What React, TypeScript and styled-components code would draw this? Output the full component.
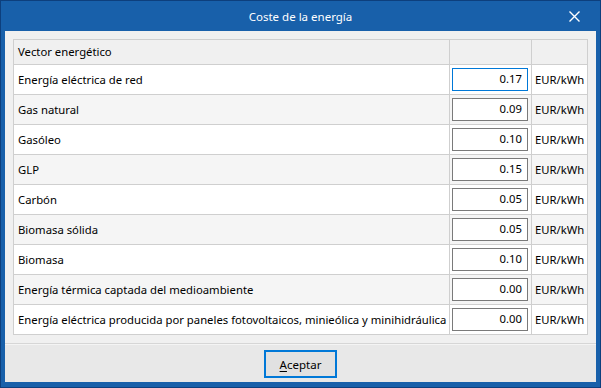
import React from "react";
import styled, { createGlobalStyle } from "styled-components";

const GlobalStyle = createGlobalStyle`
    html, body {
        margin: 0;
        padding: 0;
        background: #ffffff;
    }
    body {
        font-family: "Noto Sans", "Open Sans", sans-serif;
    }
`;

const Window = styled.div`
    width: 601px;
    height: 388px;
    box-sizing: border-box;
    border: 1px solid #0d3f7d;
    background-color: #1860aa;
    display: flex;
    flex-direction: column;
    padding: 0 4px 5px 4px;
`;

const TitleBar = styled.div`
    height: 30px;
    flex: none;
    display: flex;
    align-items: center;
    justify-content: center;
    position: relative;
    color: #ffffff;
    font-size: 11.5px;
`;

const CloseButton = styled.div`
    position: absolute;
    right: 16px;
    top: 10px;
    width: 11px;
    height: 11px;
    display: flex;
`;

const Body = styled.div`
    flex: 1;
    display: flex;
    flex-direction: column;
    background-color: #f0f0f0;
`;

const TableArea = styled.div`
    padding: 8px 8px 8px 8px;
    border-bottom: 1px solid #d6d6d6;
`;

const Grid = styled.div`
    display: grid;
    grid-template-columns: 436px 82px 56px;
    grid-auto-rows: 30px;
    grid-template-rows: 25px;
    border-top: 1px solid #cfcfcf;
    border-left: 1px solid #cfcfcf;
    font-size: 11.3px;
    color: #000000;
`;

const Cell = styled.div<{ $bg: string; $pad?: number }>`
    background-color: ${p => p.$bg};
    border-right: 1px solid #cfcfcf;
    border-bottom: 1px solid #cfcfcf;
    display: flex;
    align-items: center;
    padding: 0 0 1px ${p => p.$pad ?? 4}px;
    white-space: nowrap;
    overflow: hidden;
`;

const InputCell = styled.div<{ $bg: string }>`
    background-color: ${p => p.$bg};
    border-right: 1px solid #cfcfcf;
    border-bottom: 1px solid #cfcfcf;
    padding: 3px 3px 3px 2px;
    display: flex;
`;

const ValueBox = styled.div<{ $focused?: boolean }>`
    flex: 1;
    box-sizing: border-box;
    height: 23px;
    background: #ffffff;
    border: 1px solid ${p => (p.$focused ? "#0078d7" : "#7a7a7a")};
    display: flex;
    align-items: center;
    justify-content: flex-end;
    padding: 0 5px 2px 0;
`;

const Footer = styled.div`
    flex: 1;
    display: flex;
    align-items: center;
    justify-content: center;
    background-color: #e8e8e8;
    border-top: 1px solid #f4f4f4;
`;

const DefaultButton = styled.div`
    width: 73px;
    height: 28px;
    box-sizing: border-box;
    border: 2px solid #0078d7;
    background-color: #e1e1e1;
    display: flex;
    align-items: center;
    justify-content: center;
    font-size: 11.5px;
    color: #000000;
    margin-top: 1px;
`;

const Mnemonic = styled.span`
    text-decoration: underline;
    text-underline-offset: 2px;
`;

const rows = [
    { name: "Energía eléctrica de red", value: "0.17" },
    { name: "Gas natural", value: "0.09" },
    { name: "Gasóleo", value: "0.10" },
    { name: "GLP", value: "0.15" },
    { name: "Carbón", value: "0.05" },
    { name: "Biomasa sólida", value: "0.05" },
    { name: "Biomasa", value: "0.10" },
    { name: "Energía térmica captada del medioambiente", value: "0.00" },
    { name: "Energía eléctrica producida por paneles fotovoltaicos, minieólica y minihidráulica", value: "0.00" },
];

const headerBg = "#f0f0f0";

export default function App() {
    return (
        <>
            <GlobalStyle />
            <Window>
                <TitleBar>
                    Coste de la energía
                    <CloseButton>
                        <svg width="11" height="11" viewBox="0 0 11 11">
                            <path d="M0.5 0.5 L10.5 10.5 M10.5 0.5 L0.5 10.5" stroke="#ffffff" strokeWidth="1.4" />
                        </svg>
                    </CloseButton>
                </TitleBar>
                <Body>
                    <TableArea>
                        <Grid>
                            <Cell $bg={headerBg}>Vector energético</Cell>
                            <Cell $bg={headerBg} />
                            <Cell $bg={headerBg} />
                            {rows.map((r, i) => {
                                const bg = i % 2 === 0 ? "#ffffff" : "#f5f5f5";
                                return (
                                    <React.Fragment key={r.name}>
                                        <Cell $bg={bg}>{r.name}</Cell>
                                        <InputCell $bg={bg}>
                                            <ValueBox $focused={i === 0}>{r.value}</ValueBox>
                                        </InputCell>
                                        <Cell $bg={bg} $pad={3}>EUR/kWh</Cell>
                                    </React.Fragment>
                                );
                            })}
                        </Grid>
                    </TableArea>
                    <Footer>
                        <DefaultButton>
                            <Mnemonic>A</Mnemonic>ceptar
                        </DefaultButton>
                    </Footer>
                </Body>
            </Window>
        </>
    );
}
